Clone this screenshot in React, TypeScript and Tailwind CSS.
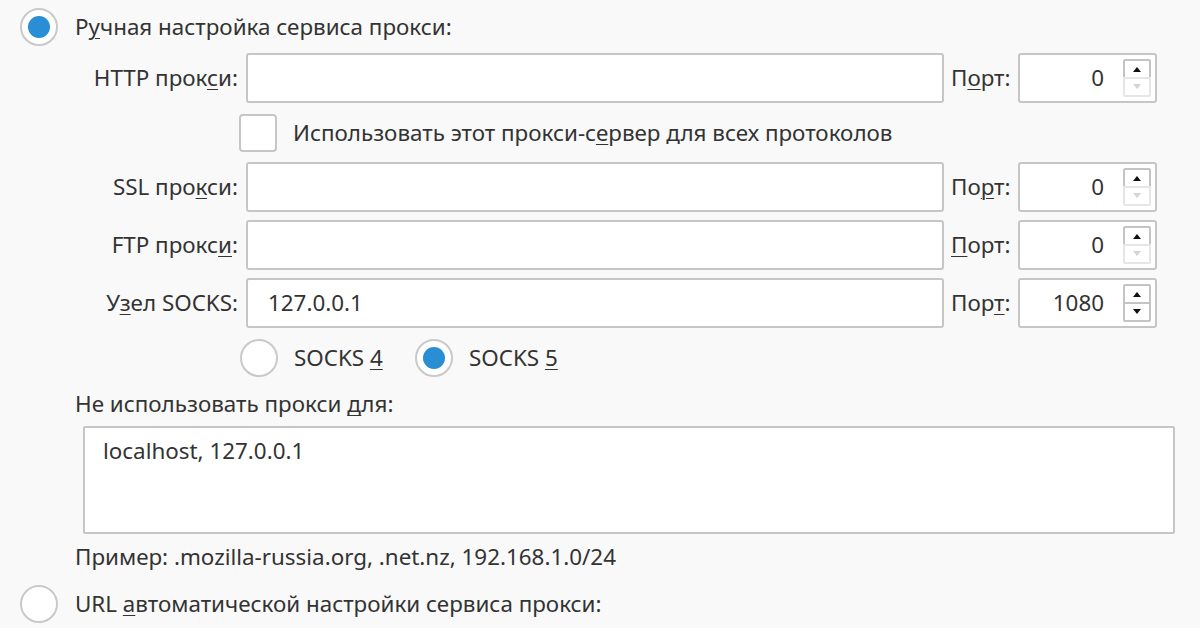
import type { ReactNode } from "react";

const font = { fontFamily: '"Noto Sans", "Open Sans", sans-serif' };

function U({ children }: { children: ReactNode }) {
  return <span className="underline decoration-1 underline-offset-[3px]">{children}</span>;
}

function Radio({ checked = false }: { checked?: boolean }) {
  return (
    <span className="grid size-[38px] shrink-0 place-items-center rounded-full border-2 border-[#c9c9c9] bg-white">
      {checked && <span className="size-[22px] rounded-full bg-[#2a8ed4]" />}
    </span>
  );
}

function Arrow({ up, enabled }: { up: boolean; enabled: boolean }) {
  return (
    <span
      className={`grid h-[20px] w-[28px] place-items-center border-2 bg-white ${enabled ? "border-[#c4c4c4]" : "border-[#e6e6e6]"} ${up ? "rounded-t-[2px]" : "rounded-b-[2px] -mt-[2px]"}`}
    >
      <svg width="10" height="6" viewBox="0 0 10 6">
        <path d={up ? "M1 6 L5 1 L9 6 Z" : "M1 0 L5 5 L9 0 Z"} fill={enabled ? "#111" : "#d4d4d4"} />
      </svg>
    </span>
  );
}

function ProxyRow({ label, value, port, portLabel, downEnabled = false }: { label: ReactNode; value?: string; port: string; portLabel: ReactNode; downEnabled?: boolean }) {
  return (
    <div className="flex h-[50px] items-center">
      <div className="w-[238px] whitespace-nowrap text-right">{label}</div>
      <div className="ml-2 flex h-[50px] w-[698px] items-center rounded-[3px] border-2 border-[#c6c6c6] bg-white pl-[20px]">{value}</div>
      <div className="w-[74px] pl-[7px]">{portLabel}</div>
      <div className="flex h-[50px] w-[139px] items-center rounded-[3px] border-2 border-[#c6c6c6] bg-white">
        <span className="flex-1 pr-[19px] text-right">{port}</span>
        <span className="mr-[4px] flex flex-col self-start pt-[4px]">
          <Arrow up enabled />
          <Arrow up={false} enabled={downEnabled} />
        </span>
      </div>
    </div>
  );
}

export default function App() {
  return (
    <div className="h-[628px] w-[1200px] overflow-hidden bg-[#f9f9f9] pt-[8px] text-[22.4px] leading-[26px] text-[#333]" style={font}>
      <div className="flex h-[38px] items-center gap-[17px] pl-[20px]">
        <Radio checked />
        <span>Р<U>у</U>чная настройка сервиса прокси:</span>
      </div>

      <div className="mt-[7px]">
        <ProxyRow label={<>HTTP прок<U>с</U>и:</>} port="0" portLabel={<>П<U>о</U>рт:</>} />
      </div>

      <div className="mt-[11px] flex h-[38px] items-center gap-[16px] pl-[239px]">
        <span className="size-[38px] rounded-[4px] border-2 border-[#c6c6c6] bg-white" />
        <span>Использовать этот прокси-с<U>е</U>рвер для всех протоколов</span>
      </div>

      <div className="mt-[10px] flex flex-col gap-[8px]">
        <ProxyRow label={<>SSL про<U>к</U>си:</>} port="0" portLabel={<>По<U>р</U>т:</>} />
        <ProxyRow label={<>FTP прокс<U>и</U>:</>} port="0" portLabel={<><U>П</U>орт:</>} />
        <ProxyRow label={<>У<U>з</U>ел SOCKS:</>} value="127.0.0.1" port="1080" portLabel={<>Пор<U>т</U>:</>} downEnabled />
      </div>

      <div className="mt-[11px] flex h-[38px] items-center pl-[240px]">
        <Radio />
        <span className="ml-[16px] w-[121px]">SOCKS <U>4</U></span>
        <Radio checked />
        <span className="ml-[16px]">SOCKS <U>5</U></span>
      </div>

      <div className="mt-[14px] pl-[75px]">Не использовать прокси <U>д</U>ля:</div>

      <div className="ml-[83px] mt-[9px] h-[108px] w-[1092px] rounded-[2px] border-2 border-[#c6c6c6] bg-white px-[18px] pt-[10px]">
        localhost, 127.0.0.1
      </div>

      <div className="mt-[10px] pl-[75px]">Пример: .mozilla-russia.org, .net.nz, 192.168.1.0/24</div>

      <div className="mt-[15px] flex h-[38px] items-center gap-[17px] pl-[20px]">
        <Radio />
        <span>URL <U>а</U>втоматической настройки сервиса прокси:</span>
      </div>
    </div>
  );
}
